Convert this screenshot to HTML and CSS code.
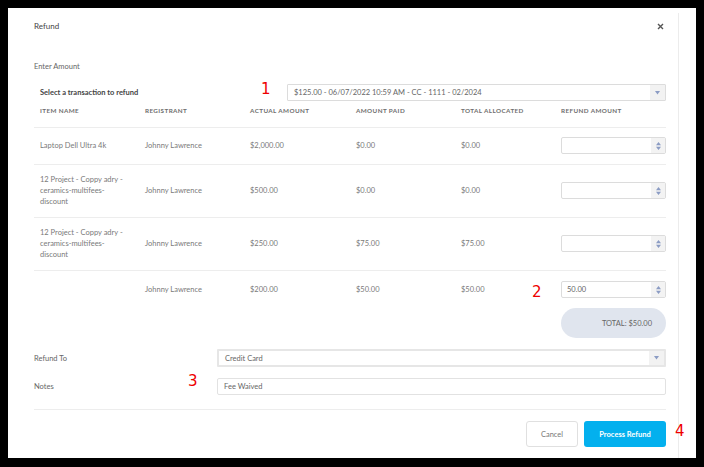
FILE: index.html
```html
<!DOCTYPE html>
<html lang="en">
<head>
    <meta charset="UTF-8">
    <title>Refund</title>
    <link rel="stylesheet" href="styles.css">
</head>
<body>
<div class="screen">
    <div class="sheet">
        <div class="dialog">
            <div class="dialog-header">
                <span class="dialog-title">Refund</span>
                <span class="close-btn">
                    <svg width="7" height="7" viewBox="0 0 7 7"><path d="M1 1L6 6M6 1L1 6" stroke="#555" stroke-width="1.4"/></svg>
                </span>
            </div>
            <div class="dialog-body">
                <div class="section-label">Enter Amount</div>
                <div class="txn-row">
                    <span class="txn-label">Select a transaction to refund</span>
                    <div class="select">
                        <span class="select-value">$125.00 - 06/07/2022 10:59 AM - CC - 1111 - 02/2024</span>
                        <span class="select-arrow"><svg width="5" height="4" viewBox="0 0 5 4"><path d="M0 0H5L2.5 3.5Z" fill="#8b9cc4"/></svg></span>
                    </div>
                </div>

                <div class="items">
                    <div class="items-head">
                        <span>Item Name</span>
                        <span>Registrant</span>
                        <span>Actual Amount</span>
                        <span>Amount Paid</span>
                        <span>Total Allocated</span>
                        <span>Refund Amount</span>
                    </div>
                    <div class="items-row">
                        <span>Laptop Dell Ultra 4k</span>
                        <span>Johnny Lawrence</span>
                        <span>$2,000.00</span>
                        <span>$0.00</span>
                        <span>$0.00</span>
                        <div class="num-input"><span class="num-value"></span><span class="spin"><svg width="5" height="8" viewBox="0 0 5 8"><path d="M0 3.3H5L2.5 0Z M0 4.7H5L2.5 8Z" fill="#8b9cc4"/></svg></span></div>
                    </div>
                    <div class="items-row">
                        <span class="item-name">12 Project - Coppy adry - ceramics-multifees-discount</span>
                        <span>Johnny Lawrence</span>
                        <span>$500.00</span>
                        <span>$0.00</span>
                        <span>$0.00</span>
                        <div class="num-input"><span class="num-value"></span><span class="spin"><svg width="5" height="8" viewBox="0 0 5 8"><path d="M0 3.3H5L2.5 0Z M0 4.7H5L2.5 8Z" fill="#8b9cc4"/></svg></span></div>
                    </div>
                    <div class="items-row">
                        <span class="item-name">12 Project - Coppy adry - ceramics-multifees-discount</span>
                        <span>Johnny Lawrence</span>
                        <span>$250.00</span>
                        <span>$75.00</span>
                        <span>$75.00</span>
                        <div class="num-input"><span class="num-value"></span><span class="spin"><svg width="5" height="8" viewBox="0 0 5 8"><path d="M0 3.3H5L2.5 0Z M0 4.7H5L2.5 8Z" fill="#8b9cc4"/></svg></span></div>
                    </div>
                    <div class="items-row last">
                        <span></span>
                        <span>Johnny Lawrence</span>
                        <span>$200.00</span>
                        <span>$50.00</span>
                        <span>$50.00</span>
                        <div class="num-input"><span class="num-value">50.00</span><span class="spin"><svg width="5" height="8" viewBox="0 0 5 8"><path d="M0 3.3H5L2.5 0Z M0 4.7H5L2.5 8Z" fill="#8b9cc4"/></svg></span></div>
                    </div>
                </div>

                <div class="total-row">
                    <div class="total-pill">TOTAL: $50.00</div>
                </div>

                <div class="form-row">
                    <span class="form-label">Refund To</span>
                    <div class="select thick">
                        <span class="select-value">Credit Card</span>
                        <span class="select-arrow"><svg width="5" height="4" viewBox="0 0 5 4"><path d="M0 0H5L2.5 3.5Z" fill="#8b9cc4"/></svg></span>
                    </div>
                </div>
                <div class="form-row notes">
                    <span class="form-label">Notes</span>
                    <div class="text-input">Fee Waived</div>
                </div>
            </div>
            <div class="dialog-footer">
                <button class="cancel-btn">Cancel</button>
                <button class="process-btn">Process Refund</button>
            </div>
        </div>
    </div>

    <span class="marker m1">1</span>
    <span class="marker m2">2</span>
    <span class="marker m3">3</span>
    <span class="marker m4">4</span>
</div>
</body>
</html>
```

FILE: styles.css
```css
body {
    margin: 0;
    font-family: Lato, "Open Sans", sans-serif;
    background: #000;
}
.screen {
    position: relative;
    width: 704px;
    height: 467px;
    box-sizing: border-box;
    padding: 8px 8px 9px 8px;
    background: #000;
}
.sheet {
    display: flex;
    height: 450px;
    background: #fff;
}
.dialog {
    width: 670px;
    margin-top: 5px;
    border-right: 1px solid #ececec;
}
.dialog-header {
    display: flex;
    justify-content: space-between;
    align-items: center;
    height: 26px;
    padding: 0 14px 0 26px;
}
.dialog-title {
    font-size: 8px;
    color: #444;
}
.close-btn {
    display: flex;
}
.dialog-body {
    padding: 0 12px 0 26px;
}
.section-label {
    margin-top: 22px;
    line-height: 12px;
    font-size: 7.5px;
    color: #666;
}
.txn-row {
    display: grid;
    grid-template-columns: 253px 1fr;
    align-items: center;
    margin-top: 11px;
    height: 17px;
}
.txn-label {
    padding-left: 6px;
    font-size: 7.5px;
    font-weight: 700;
    color: #444;
}
.select {
    display: flex;
    height: 17px;
    box-sizing: border-box;
    border: 1px solid #dcdcdc;
    border-radius: 1px;
    background: #fff;
}
.select.thick {
    height: 18px;
    border: 2px solid #e6e6e6;
}
.select-value {
    flex: 1;
    display: flex;
    align-items: center;
    padding-left: 6px;
    font-size: 7.5px;
    color: #666;
}
.select-arrow {
    display: flex;
    align-items: center;
    justify-content: center;
    width: 15px;
    background: #f2f2f2;
}
.items-head, .items-row {
    display: grid;
    grid-template-columns: 105px 105px 106px 105px 100px 111px;
    border-bottom: 1px solid #ededed;
}
.items-head {
    padding: 5px 0 11px;
    line-height: 10px;
    font-size: 6.3px;
    font-weight: 700;
    letter-spacing: 0.4px;
    text-transform: uppercase;
    color: #6e6e6e;
}
.items-head span, .items-row > * {
    padding-left: 6px;
}
.items-row {
    align-items: center;
    padding: 9px 0 10px;
    line-height: 11px;
    font-size: 7.5px;
    color: #7a7a7a;
}
.items-row.last {
    border-bottom: none;
    padding: 10px 0 9px;
}
.item-name {
    padding-right: 12px;
}
.num-input {
    display: flex;
    height: 17px;
    box-sizing: border-box;
    margin-left: 6px;
    padding-left: 0;
    border: 1px solid #dcdcdc;
    border-radius: 2px;
    background: #fff;
}
.num-value {
    flex: 1;
    display: flex;
    align-items: center;
    padding-left: 5px;
    font-size: 7.5px;
    color: #666;
}
.spin {
    display: flex;
    align-items: center;
    justify-content: center;
    width: 14px;
    background: #f3f3f3;
}
.total-row {
    display: flex;
    justify-content: flex-end;
    margin-top: 1px;
}
.total-pill {
    width: 105px;
    height: 30px;
    box-sizing: border-box;
    display: flex;
    align-items: center;
    justify-content: flex-end;
    padding-right: 14px;
    border-radius: 15px;
    background: #e0e5ee;
    font-size: 7.5px;
    color: #666;
}
.form-row {
    display: grid;
    grid-template-columns: 183px 1fr;
    align-items: center;
    margin-top: 11px;
}
.form-row.notes {
    margin-top: 11px;
}
.form-label {
    font-size: 7.5px;
    color: #666;
}
.text-input {
    height: 17px;
    box-sizing: border-box;
    display: flex;
    align-items: center;
    padding-left: 6px;
    border: 1px solid #e2e2e2;
    border-radius: 2px;
    font-size: 7.5px;
    color: #666;
}
.dialog-footer {
    display: flex;
    justify-content: flex-end;
    gap: 6px;
    margin: 14px 12px 0 26px;
    padding-top: 11px;
    border-top: 1px solid #ededed;
}
button {
    height: 26px;
    border-radius: 3px;
    font-family: Lato, "Open Sans", sans-serif;
    font-size: 7.5px;
    cursor: pointer;
}
.cancel-btn {
    width: 52px;
    border: 1px solid #e0e0e0;
    background: #fff;
    color: #777;
}
.process-btn {
    width: 82px;
    border: none;
    background: #03b0ee;
    color: #fff;
    font-weight: 700;
}
.marker {
    position: absolute;
    font-family: "DejaVu Sans", sans-serif;
    font-size: 15px;
    line-height: 16px;
    color: #ee0000;
}
.m1 { left: 261px; top: 81px; }
.m2 { left: 532px; top: 284px; }
.m3 { left: 188px; top: 373px; }
.m4 { left: 675px; top: 423px; }
```
